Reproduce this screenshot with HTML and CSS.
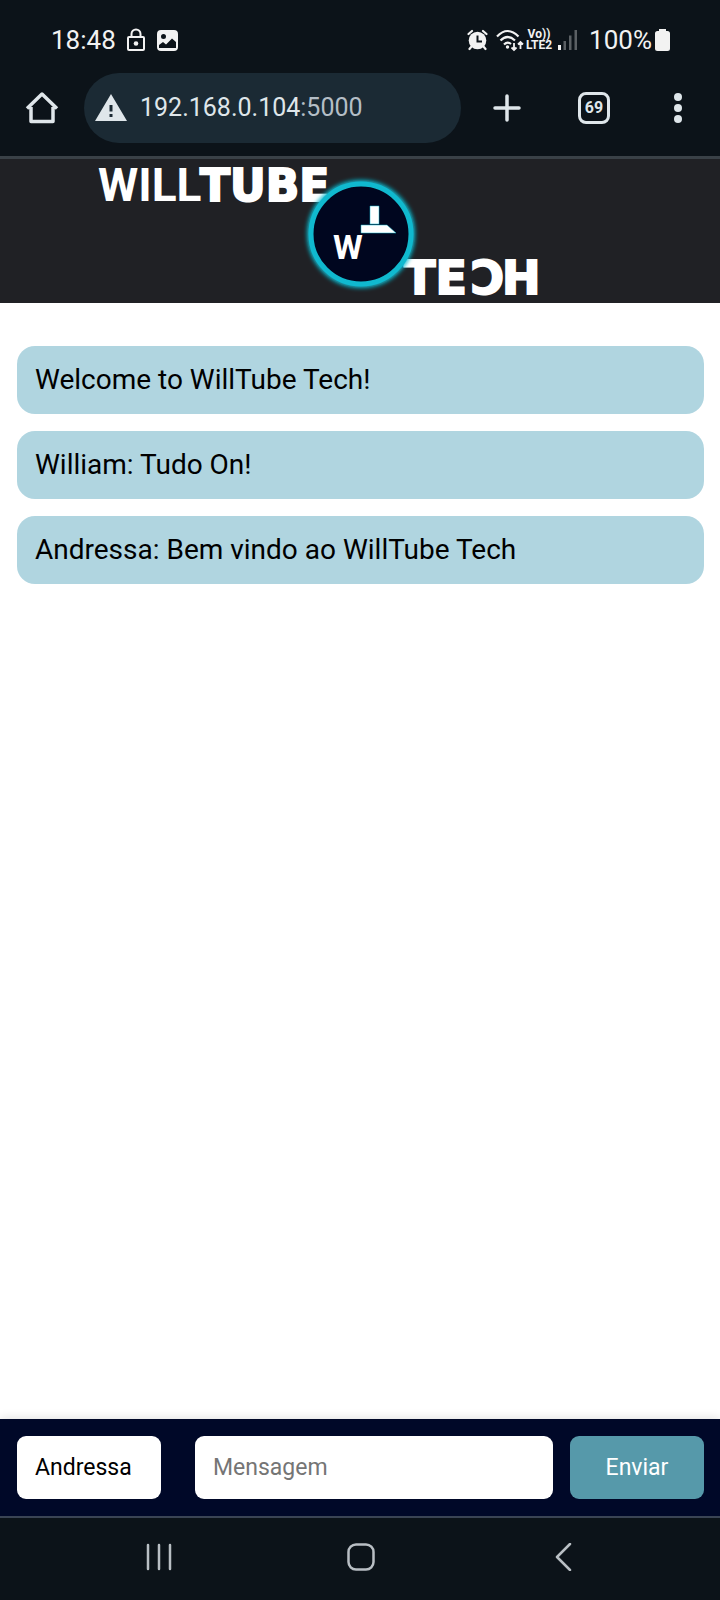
FILE: index.html
```html
<!DOCTYPE html>
<html lang="pt-BR">
<head>
  <meta charset="utf-8">
  <meta name="viewport" content="width=device-width, initial-scale=1">
  <title>WillTube Tech</title>
  <link rel="stylesheet" href="styles.css">
</head>
<body>
  <div class="status-bar">
    <div class="status-left">
      <span class="status-text">18:48</span>
      <svg class="icon-lock" width="18" height="24" viewBox="0 0 18 24" fill="none" stroke="currentColor" stroke-width="2">
        <rect x="1" y="9" width="16" height="13" rx="1"/>
        <path d="M4.500 9V6a4.500 4.500 0 0 1 9 0v3"/>
        <circle cx="9" cy="15.500" r="2.300" fill="currentColor" stroke="none"/>
      </svg>
      <svg class="icon-picture" width="21" height="21" viewBox="0 0 21 21">
        <path fill="currentColor" fill-rule="evenodd" d="M4 0h13a4 4 0 0 1 4 4v13a4 4 0 0 1-4 4H4a4 4 0 0 1-4-4V4a4 4 0 0 1 4-4ZM6.500 4a2.500 2.500 0 1 0 0 5 2.500 2.500 0 0 0 0-5ZM2 15v3h17v-6l-4-3.500-6 6-3-2.500Z"/>
      </svg>
    </div>
    <div class="status-right">
      <svg width="21" height="22" viewBox="0 0 21 22">
        <g fill="none" stroke="currentColor" stroke-width="2.200" stroke-linecap="round">
          <path d="M1.500 5 5 2M19.500 5 16 2M4.500 17.500 2.500 20M16.500 17.500l2 2.500"/>
        </g>
        <circle cx="10.500" cy="11.500" r="8.800" fill="currentColor"/>
        <path d="M10.500 6.500v6h4.500" fill="none" stroke="#0c1319" stroke-width="2"/>
      </svg>
      <svg class="icon-wifi" width="28" height="23" viewBox="0 0 28 23" fill="none" stroke="currentColor" stroke-width="2.200">
        <path d="M1 7.500Q11.500-3.500 22.500 7.500M4.500 11.500Q11.500 4.500 19 11.500M8 15.500Q11.500 12 15 15"/>
        <circle cx="11.500" cy="18" r="1.700" fill="currentColor" stroke="none"/>
        <path stroke-width="1.800" d="M18 14v7M15.500 18.500l2.500 2.500 2.500-2.500M24.500 20v-7M22 15.500l2.500-2.500 2.500 2.500"/>
      </svg>
      <span class="volte"><span>Vo))</span><span>LTE2</span></span>
      <svg class="icon-signal" width="20" height="20" viewBox="0 0 20 20" fill="currentColor">
        <path d="M0 15h3v5H0z"/>
        <path opacity=".35" d="M5.500 11H8v9H5.500zM11 5.500h2.500V20H11zM16.500 0H19v20h-2.500z"/>
      </svg>
      <span class="status-text">100%</span>
      <svg class="icon-battery" width="15" height="22" viewBox="0 0 15 22" fill="currentColor">
        <path d="M4 0h7v2h1.500a2.500 2.500 0 0 1 2.500 2.500v15a2.500 2.500 0 0 1-2.500 2.500h-10A2.500 2.500 0 0 1 0 19.500v-15A2.500 2.500 0 0 1 2.500 2H4Z"/>
      </svg>
    </div>
  </div>

  <div class="toolbar">
    <button class="tool tool-home" aria-label="Início">
      <svg width="34" height="34" viewBox="0 0 34 34" fill="none" stroke="currentColor" stroke-width="3.500" stroke-linejoin="round">
        <path d="M2 17.500 17 3l15 14.500M6 16v14.500h22V16" />
      </svg>
    </button>
    <button class="address">
      <svg width="32" height="28" viewBox="0 0 32 28">
        <path fill="currentColor" fill-rule="evenodd" d="M16 0l16 27H0ZM14.500 11v6.500h3V11ZM14.500 20v3h3v-3Z"/>
      </svg>
      <span class="address-text">192.168.0.104<span class="port">:5000</span></span>
    </button>
    <button class="tool tool-add" aria-label="Nova guia">
      <svg width="28" height="28" viewBox="0 0 28 28" stroke="currentColor" stroke-width="3.500" stroke-linecap="round">
        <path d="M14 2v24M2 14h24"/>
      </svg>
    </button>
    <button class="tool tool-tabs" aria-label="Guias"><span class="tab-count">69</span></button>
    <button class="tool tool-menu" aria-label="Menu">
      <svg width="8" height="30" viewBox="0 0 8 30" fill="currentColor">
        <circle cx="4" cy="4" r="4"/><circle cx="4" cy="15" r="4"/><circle cx="4" cy="26" r="4"/>
      </svg>
    </button>
  </div>

  <header class="site-header">
    <svg class="logo" viewBox="0 0 720 144" role="img" aria-label="WillTube Tech">
      <defs>
        <filter id="glow" x="-20%" y="-20%" width="140%" height="140%"><feGaussianBlur stdDeviation="2"/></filter>
      </defs>
      <text class="logo-will" x="98" y="42">WILL</text>
      <text class="logo-bold logo-tube" x="200" y="42">TUBE</text>
      <text class="logo-bold logo-tech" x="404" y="135">TE</text>
      <text class="logo-bold logo-tech" transform="translate(504 135) scale(-1 1)">C</text>
      <text class="logo-bold logo-tech" x="502" y="135">H</text>
      <circle cx="361" cy="75" r="51" fill="none" stroke="#10b9cf" stroke-width="6" filter="url(#glow)"/>
      <circle cx="361" cy="75" r="50" fill="#00061f" stroke="#10b9cf" stroke-width="5"/>
      <text class="logo-w" x="333" y="100">W</text>
      <g fill="#fff" stroke="#10b9cf" stroke-opacity=".5">
        <path d="M370 47h9v18h-9z"/>
        <path d="M361 66h26l9 8h-35z"/>
      </g>
    </svg>
  </header>

  <main class="messages">
    <p class="message">Welcome to WillTube Tech!</p>
    <p class="message">William: Tudo On!</p>
    <p class="message">Andressa: Bem vindo ao WillTube Tech</p>
  </main>

  <form class="composer">
    <input class="field field-name" type="text" value="Andressa" aria-label="Nome">
    <input class="field field-message" type="text" placeholder="Mensagem" aria-label="Mensagem">
    <button class="send" type="button">Enviar</button>
  </form>

  <nav class="system-nav" aria-label="Sistema">
    <button class="nav-button" aria-label="Recentes">
      <svg width="28" height="28" viewBox="0 0 28 28" stroke="currentColor" stroke-width="2.500" stroke-linecap="round">
        <path d="M3 2v24M14 2v24M25 2v24"/>
      </svg>
    </button>
    <button class="nav-button" aria-label="Tela inicial">
      <svg width="28" height="28" viewBox="0 0 28 28" fill="none" stroke="currentColor" stroke-width="2.500">
        <rect x="1.500" y="1.500" width="25" height="25" rx="7.500"/>
      </svg>
    </button>
    <button class="nav-button" aria-label="Voltar">
      <svg width="28" height="28" viewBox="0 0 28 28" fill="none" stroke="currentColor" stroke-width="2.500" stroke-linecap="round" stroke-linejoin="round">
        <path d="M21 1 8 14l13 13"/>
      </svg>
    </button>
  </nav>
</body>
</html>
```

FILE: styles.css
```css
* {
  box-sizing: border-box;
}

body {
  margin: 0;
  min-height: 100vh;
  display: flex;
  flex-direction: column;
  background: #fff;
  color: #000;
  font-family: Roboto, "Liberation Sans", sans-serif;
}

button {
  margin: 0;
  padding: 0;
  border: 0;
  background: none;
  color: inherit;
  font: inherit;
}

svg {
  display: block;
  flex: none;
}

.status-bar {
  display: flex;
  justify-content: space-between;
  padding: 24px 50px 16px 51px;
  background: #0c1319;
  color: #f2f2f2;
}

.status-left,
.status-right {
  display: flex;
  align-items: center;
  height: 32px;
}

.status-text {
  font-size: 26px;
  line-height: 32px;
}

.icon-lock {
  margin-left: 11px;
}

.icon-picture {
  margin-left: 12px;
}

.icon-wifi {
  margin-left: 8px;
}

.volte {
  display: flex;
  flex-direction: column;
  align-items: center;
  margin: 0 6px 0 2px;
  font-size: 12px;
  font-weight: 700;
  line-height: 11px;
}

.icon-signal {
  margin-right: 11px;
}

.icon-battery {
  margin-left: 3px;
}

.toolbar {
  display: flex;
  align-items: center;
  padding: 1px 0 13px;
  border-bottom: 3px solid #3a4147;
  background: #0c1319;
  color: #dfe6ea;
}

.tool {
  display: flex;
  align-items: center;
  justify-content: center;
  height: 70px;
}

.tool-home {
  width: 84px;
}

.tool-add {
  width: 92px;
}

.tool-tabs {
  width: 82px;
}

.tool-menu {
  width: 85px;
}

.address {
  display: flex;
  flex: 1;
  align-items: center;
  gap: 13px;
  height: 70px;
  padding: 0 11px;
  border-radius: 35px;
  background: #1b2a34;
  text-align: left;
}

.address-text {
  font-size: 25px;
  line-height: 32px;
}

.port {
  color: #b4bec6;
}

.tab-count {
  width: 32px;
  height: 32px;
  border: 3px solid currentColor;
  border-radius: 8px;
  font-size: 16px;
  font-weight: 700;
  line-height: 26px;
}

.site-header {
  background: #202125;
}

.logo {
  width: 100%;
  max-width: 720px;
  margin: 0 auto;
  overflow: visible;
}

.logo text {
  fill: #fff;
}

.logo-will {
  font-size: 46px;
  font-weight: 700;
}

.logo-bold {
  font-family: "DejaVu Sans", sans-serif;
  font-weight: 700;
  stroke: #fff;
  stroke-width: 2px;
}

.logo-tube {
  font-size: 44px;
}

.logo-tech {
  font-size: 46px;
}

.logo-w {
  font-size: 34px;
  font-weight: 700;
}

.messages {
  display: flex;
  flex: 1;
  flex-direction: column;
  gap: 17px;
  padding: 43px 16px 43px 17px;
}

.message {
  margin: 0;
  padding: 18px;
  border-radius: 18px;
  background: #b0d5e0;
  font-size: 28px;
  line-height: 32px;
}

.composer {
  display: flex;
  gap: 17px;
  padding: 17px 16px 17px 17px;
  border-bottom: 2px solid #3a4454;
  background: #000828;
  box-shadow: 0 0 10px rgba(0, 0, 0, 0.15);
}

.field {
  min-width: 0;
  height: 63px;
  padding: 0 18px;
  border: 0;
  border-radius: 9px;
  background: #fff;
  color: #000;
  font: 23px/30px Roboto, "Liberation Sans", sans-serif;
}

.field::placeholder {
  color: #757575;
}

.field-name {
  width: 144px;
  margin-right: 17px;
}

.field-message {
  flex: 1;
}

.send {
  width: 134px;
  border-radius: 9px;
  background: #5699aa;
  color: #fff;
  font-size: 23px;
}

.system-nav {
  display: flex;
  justify-content: center;
  gap: 74px;
  padding: 14px 0 18px 2px;
  background: #0c1319;
  color: #b9bfc4;
}

.nav-button {
  display: flex;
  align-items: center;
  justify-content: center;
  width: 128px;
  height: 50px;
}
```
